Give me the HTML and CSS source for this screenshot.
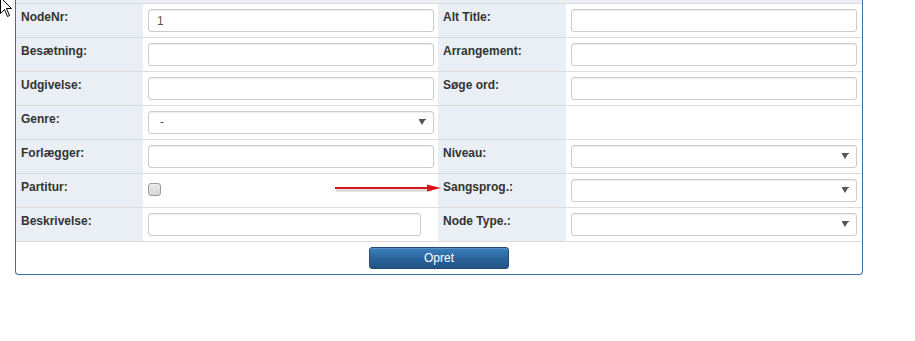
FILE: index.html
```html
<!DOCTYPE html>
<html>
<head>
<meta charset="utf-8">
<link rel="stylesheet" href="styles.css">
</head>
<body>
<div class="page">
  <div class="panel">
    <div class="panel-top"></div>
    <div class="grid">
      <div class="lbl">NodeNr:</div>
      <div class="fld"><input class="inp" type="text" value="1"></div>
      <div class="lbl">Alt Title:</div>
      <div class="fld fld-r"><input class="inp" type="text"></div>

      <div class="lbl">Besætning:</div>
      <div class="fld"><input class="inp" type="text"></div>
      <div class="lbl">Arrangement:</div>
      <div class="fld fld-r"><input class="inp" type="text"></div>

      <div class="lbl">Udgivelse:</div>
      <div class="fld"><input class="inp" type="text"></div>
      <div class="lbl">Søge ord:</div>
      <div class="fld fld-r"><input class="inp" type="text"></div>

      <div class="lbl">Genre:</div>
      <div class="fld"><div class="sel"><span class="sel-text">-</span><span class="caret"></span></div></div>
      <div class="lbl"></div>
      <div class="fld fld-r"></div>

      <div class="lbl">Forlægger:</div>
      <div class="fld"><input class="inp" type="text"></div>
      <div class="lbl">Niveau:</div>
      <div class="fld fld-r"><div class="sel"><span class="sel-text"></span><span class="caret"></span></div></div>

      <div class="lbl">Partitur:</div>
      <div class="fld"><span class="chk"></span></div>
      <div class="lbl">Sangsprog.:</div>
      <div class="fld fld-r"><div class="sel"><span class="sel-text"></span><span class="caret"></span></div></div>

      <div class="lbl">Beskrivelse:</div>
      <div class="fld"><input class="inp inp-short" type="text"></div>
      <div class="lbl">Node Type.:</div>
      <div class="fld fld-r"><div class="sel"><span class="sel-text"></span><span class="caret"></span></div></div>
    </div>
    <div class="footer">
      <button class="btn" type="button">Opret</button>
    </div>
  </div>

  <svg class="annot-arrow" width="112" height="16" viewBox="0 0 112 16">
    <line x1="2" y1="8" x2="98" y2="8" stroke="rgba(0,0,0,0.18)" stroke-width="2" transform="translate(1,1.5)"/>
    <line x1="2" y1="7" x2="98" y2="7" stroke="#d9151b" stroke-width="2"/>
    <polygon points="94,3.5 108,7 94,10.5" fill="#d9151b"/>
  </svg>

  <svg class="cursor" width="14" height="22" viewBox="0 0 14 22">
    <polygon points="0.5,0.5 0.5,16.5 4.5,12.5 7.5,19.5 9.5,18.5 6.5,11.5 11.5,11.5" fill="#fff" stroke="#000" stroke-width="1"/>
  </svg>
</div>
</body>
</html>
```

FILE: styles.css
```css
html, body {
  margin: 0;
  padding: 0;
  background: #fff;
}

body {
  font-family: "Liberation Sans", Arial, sans-serif;
  font-size: 12px;
  color: #333;
}

.page {
  position: relative;
  width: 915px;
  height: 341px;
  overflow: hidden;
}

.panel {
  margin-left: 15px;
  width: 848px;
  box-sizing: border-box;
  border: 1px solid #3f709e;
  border-top: none;
  border-radius: 0 0 4px 4px;
  background: #fff;
}

.panel-top {
  height: 3px;
  background: #e9eff5;
}

.grid {
  display: grid;
  grid-template-columns: 127px 295px 128px 1fr;
}

.lbl,
.fld {
  box-sizing: border-box;
  height: 34px;
  border-top: 1px solid #dddddd;
  padding: 5px 5px 5px 5px;
}

.lbl {
  background: #e9eff5;
  font-weight: bold;
  line-height: 17px;
  color: #333;
}

.fld {
  background: #fff;
  padding-right: 4px;
}

.fld-r {
  padding-right: 5px;
}

.inp {
  display: block;
  box-sizing: border-box;
  width: 100%;
  height: 23px;
  margin: 0;
  padding: 0 8px;
  border: 1px solid #cccccc;
  border-radius: 3px;
  box-shadow: inset 0 1px 1px rgba(0, 0, 0, 0.075);
  font-family: "Liberation Sans", Arial, sans-serif;
  font-size: 12px;
  color: #555;
  background: #fff;
  outline: none;
}

.inp-short {
  width: 273px;
}

.sel {
  position: relative;
  box-sizing: border-box;
  width: 100%;
  height: 23px;
  border: 1px solid #cccccc;
  border-radius: 3px;
  box-shadow: inset 0 1px 1px rgba(0, 0, 0, 0.075);
  background: #fff;
  color: #555;
  line-height: 21px;
  padding-left: 11px;
}

.caret {
  position: absolute;
  right: 7px;
  top: 7px;
  width: 7px;
  height: 6px;
  box-sizing: border-box;
  border-top: 1px solid #555;
}

.caret::after {
  content: "";
  position: absolute;
  left: 0;
  top: 0;
  border-left: 3.5px solid transparent;
  border-right: 3.5px solid transparent;
  border-top: 5px solid #555;
}

.chk {
  display: block;
  margin-top: 4px;
  width: 11px;
  height: 11px;
  border: 1px solid #9a9a9a;
  border-radius: 3px;
  background: linear-gradient(#e9e9e9, #d6d6d6);
}

.footer {
  border-top: 1px solid #dddddd;
  padding: 5px 0;
  display: flex;
  justify-content: center;
}

.btn {
  width: 140px;
  height: 22px;
  margin: 0;
  padding: 0;
  border: 1px solid #1f4c76;
  border-radius: 3px;
  background: linear-gradient(#3a7fbd, #2a6299 55%, #225483);
  color: #fff;
  font-family: "Liberation Sans", Arial, sans-serif;
  font-size: 12px;
  line-height: 20px;
  box-shadow: inset 0 1px 0 rgba(255, 255, 255, 0.15);
}

.annot-arrow {
  position: absolute;
  left: 333px;
  top: 181px;
}

.cursor {
  position: absolute;
  left: 0;
  top: -3px;
}
```
